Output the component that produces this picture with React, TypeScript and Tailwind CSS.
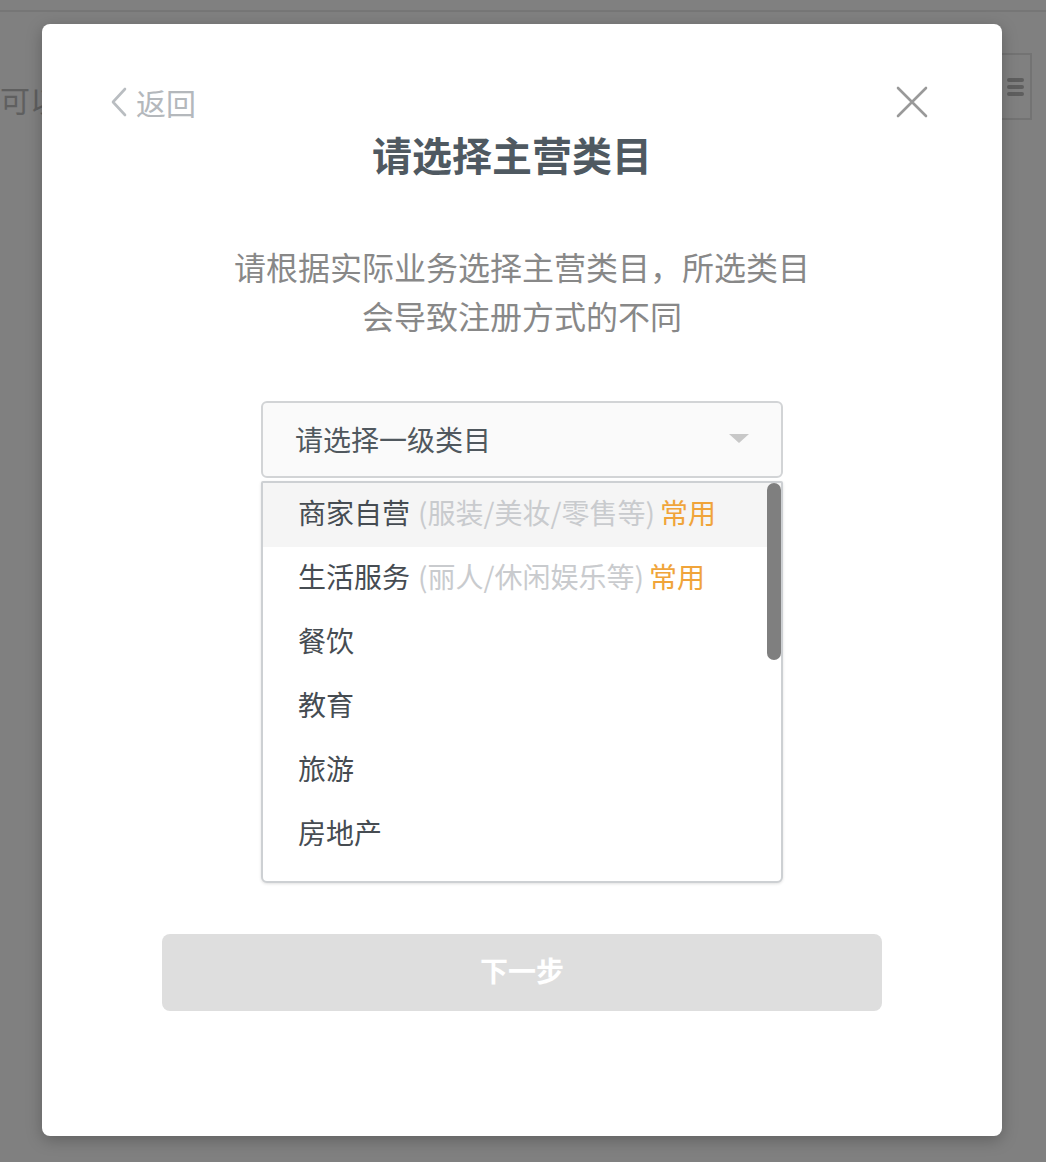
import React from "react";

const items: { name: string; hint?: string; hot?: boolean }[] = [
  { name: "商家自营", hint: "(服装/美妆/零售等)", hot: true },
  { name: "生活服务", hint: "(丽人/休闲娱乐等)", hot: true },
  { name: "餐饮" },
  { name: "教育" },
  { name: "旅游" },
  { name: "房地产" },
];

function CategoryModal() {
  return (
    <div className="w-[960px] h-[1112px] bg-white rounded-[8px] shadow-[0_4px_16px_rgba(0,0,0,0.25)] flex flex-col items-center pt-[62px]">
      <div className="w-full flex flex-row items-center justify-between pl-[68px] pr-[74px] h-[32px]">
        <div className="flex flex-row items-center gap-[9px] text-[#b4b8bc] text-[30px] leading-none">
          <svg width="17" height="30" viewBox="0 0 17 30" fill="none">
            <path d="M15 2 L3 15 L15 28" stroke="#b9bdc1" strokeWidth="2.6" strokeLinecap="round" strokeLinejoin="round" />
          </svg>
          <span>返回</span>
        </div>
        <svg width="32" height="32" viewBox="0 0 32 32" fill="none">
          <path d="M2 2 L30 30 M30 2 L2 30" stroke="#999999" strokeWidth="2.6" strokeLinecap="round" />
        </svg>
      </div>

      <h1 className="mt-[16px] mr-[20px] text-[40px] leading-[40px] font-bold text-[#4f5961]">请选择主营类目</h1>

      <p className="mt-[68px] text-[32px] leading-[49px] text-[#888888] text-center">
        请根据实际业务选择主营类目，所选类目
        <br />
        会导致注册方式的不同
      </p>

      <div className="mt-[61px] w-[522px] flex flex-col">
        <div className="h-[77px] border-2 border-[#d2d4d6] rounded-[6px] bg-[#fafafa] flex flex-row items-center justify-between pl-[32px] pr-[32px] pb-[2px]">
          <span className="text-[28px] text-[#50585e]">请选择一级类目</span>
          <svg width="20" height="10" viewBox="0 0 20 10">
            <path d="M0 0 L20 0 L10 9 Z" fill="#c8c8c8" />
          </svg>
        </div>

        <div className="relative mt-[3px] h-[402px] border-2 border-[#cdd0d3] rounded-b-[6px] rounded-t-[2px] overflow-hidden bg-white shadow-[0_1px_3px_rgba(0,0,0,0.12)]">
          <ul className="flex flex-col">
            {items.map((item, i) => (
              <li
                key={item.name}
                className={`h-[64px] flex flex-row items-center pl-[35px] pb-[6px] text-[28px] ${i === 0 ? "bg-[#f5f5f5]" : ""}`}
              >
                <span className="text-[#464c52]">{item.name}</span>
                {item.hint && <span className="ml-[8px] text-[#c9cbce]">{item.hint}</span>}
                {item.hot && <span className="ml-[5px] text-[#f0a43a]">常用</span>}
              </li>
            ))}
          </ul>
          <div className="absolute top-0 right-0 w-[14px] h-[177px] rounded-full bg-[#7f7f7f]" />
        </div>
      </div>

      <button className="mt-[51px] w-[720px] h-[77px] rounded-[8px] bg-[#dedede] text-white text-[28px] font-bold pb-[6px]">
        下一步
      </button>
    </div>
  );
}

export default function App() {
  return (
    <div
      className="relative w-full h-[1162px] bg-[#808080] overflow-hidden"
      style={{ fontFamily: '"Noto Sans CJK SC", "Noto Sans", sans-serif' }}
    >
      {/* page behind the overlay */}
      <div className="h-[12px] border-b-2 border-[#767676]" />
      <div className="flex flex-row items-start justify-between mt-[41px] pr-[14px]">
        <span className="mt-[26px] text-[30px] leading-[40px] text-[#5f5f5f]">可以</span>
        <div className="w-[420px] h-[67px] border-2 border-[#737373] flex flex-row items-center justify-end pr-[6px]">
          <div className="flex flex-col gap-[3px]">
            <div className="w-[17px] h-[4px] rounded-full bg-[#5e5e5e]" />
            <div className="w-[17px] h-[4px] rounded-full bg-[#5e5e5e]" />
            <div className="w-[17px] h-[4px] rounded-full bg-[#5e5e5e]" />
          </div>
        </div>
      </div>

      <div className="absolute inset-0 flex justify-center pt-[24px] pr-[2px]">
        <CategoryModal />
      </div>
    </div>
  );
}
